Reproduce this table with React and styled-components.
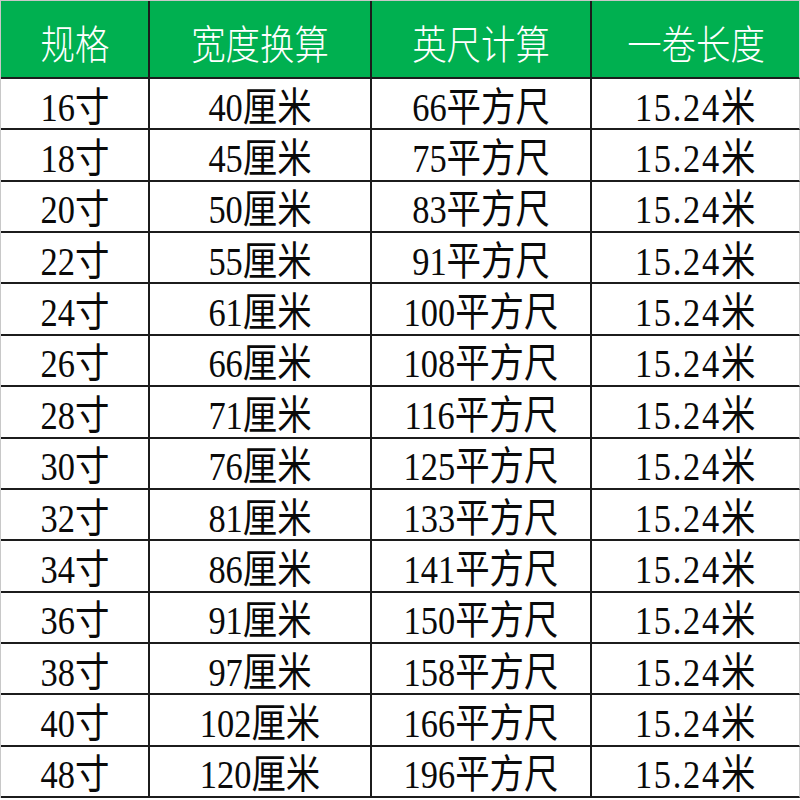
import styled, { createGlobalStyle } from "styled-components";

const rows = [
  ["16寸", "40厘米", "66平方尺"],
  ["18寸", "45厘米", "75平方尺"],
  ["20寸", "50厘米", "83平方尺"],
  ["22寸", "55厘米", "91平方尺"],
  ["24寸", "61厘米", "100平方尺"],
  ["26寸", "66厘米", "108平方尺"],
  ["28寸", "71厘米", "116平方尺"],
  ["30寸", "76厘米", "125平方尺"],
  ["32寸", "81厘米", "133平方尺"],
  ["34寸", "86厘米", "141平方尺"],
  ["36寸", "91厘米", "150平方尺"],
  ["38寸", "97厘米", "158平方尺"],
  ["40寸", "102厘米", "166平方尺"],
  ["48寸", "120厘米", "196平方尺"],
];

const headers = ["规格", "宽度换算", "英尺计算", "一卷长度"];

const App = () => {
  return (
    <>
      <GlobalStyle />
      <Sheet>
        {headers.map((h, i) => (
          <HeadCell key={h} $last={i === 3}>
            <Text>{h}</Text>
          </HeadCell>
        ))}
        {rows.map((r) =>
          [...r, "15.24米"].map((v, i) => (
            <Cell key={r[0] + i} $last={i === 3}>
              <Text $spaced={i === 3}>{v}</Text>
            </Cell>
          ))
        )}
      </Sheet>
    </>
  );
};

const GlobalStyle = createGlobalStyle`
  html, body {
    margin: 0;
    padding: 0;
    background: #ffffff;
  }
`;

const Sheet = styled.div`
  width: 800px;
  height: 798px;
  display: grid;
  grid-template-columns: 149px 222px 220px 1fr;
  grid-template-rows: 78px repeat(14, 1fr);
  border-left: 1px solid #c8c8c8;
  border-top: 1px solid #c8c8c8;
  box-sizing: border-box;
  background: #ffffff;
`;

const Cell = styled.div`
  display: flex;
  align-items: center;
  justify-content: center;
  padding-top: 8px;
  box-sizing: border-box;
  border-bottom: 2px solid #1c1c1c;
  border-right: ${(p) => (p.$last ? "1px solid #d0d0d0" : "2px solid #1c1c1c")};
  color: #0a0a0a;
  font-family: "Liberation Serif", "Noto Sans CJK SC", serif;
  font-size: 40px;
  overflow: hidden;
  white-space: nowrap;
`;

const HeadCell = styled(Cell)`
  background: #00b050;
  color: #ffffff;
  padding-top: 6px;
  font-family: "Noto Sans CJK SC", sans-serif;
  font-weight: 300;
  font-size: 40px;
`;

const Text = styled.span`
  display: inline-block;
  line-height: 1;
  letter-spacing: ${(p) => (p.$spaced ? "2px" : "0")};
  transform: scaleX(0.86);
`;

export default App;
